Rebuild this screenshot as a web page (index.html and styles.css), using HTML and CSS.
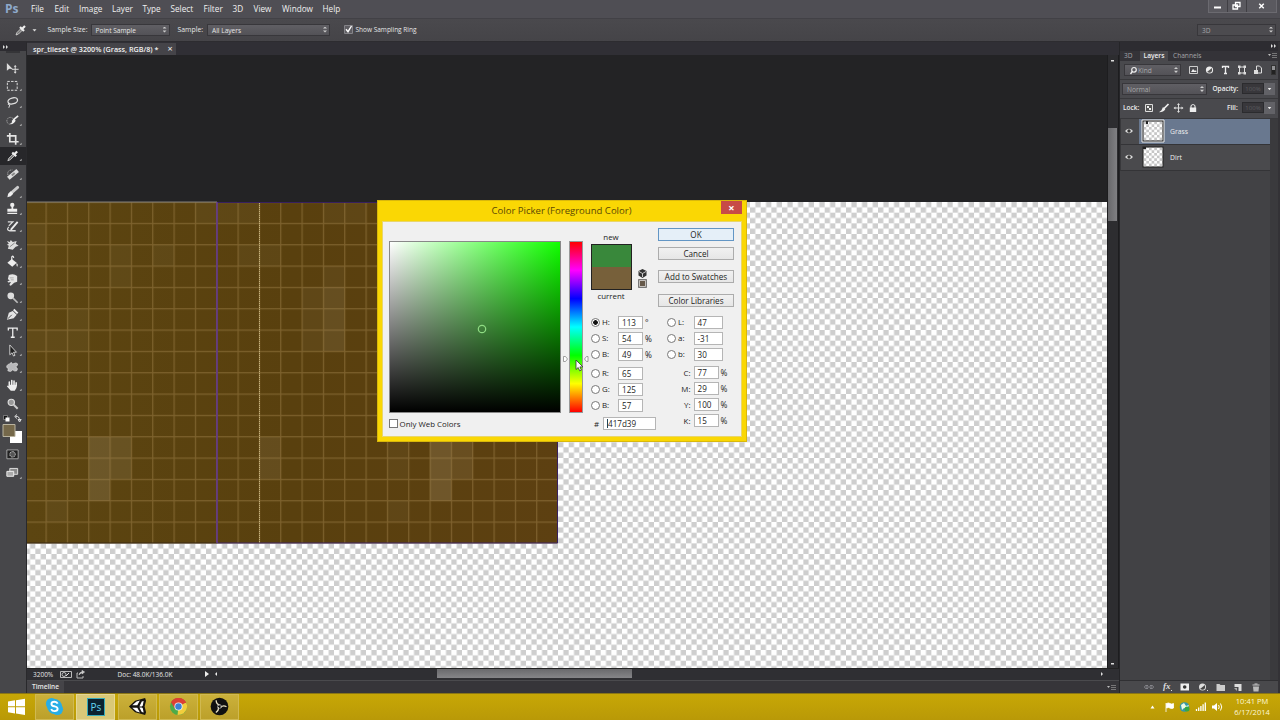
FILE: index.html
```html
<!DOCTYPE html>
<html lang="en">
<head>
<meta charset="utf-8">
<title>Photoshop</title>
<link rel="stylesheet" href="styles.css">
</head>
<body>
<div class="app">
  <header class="menubar">
    <b class="ps">Ps</b>
    <nav class="menus"><span>File</span><span>Edit</span><span>Image</span><span>Layer</span><span>Type</span><span>Select</span><span>Filter</span><span>3D</span><span>View</span><span>Window</span><span>Help</span></nav>
    <div class="winbtns">
      <svg viewBox="0 0 18 12"><path d="M5 7.5h7" stroke="#fff" stroke-width="2"/></svg>
      <svg viewBox="0 0 18 12"><path d="M7.5 2.5h4.500v4h-4.500zM5 5h4.500v4H5z" fill="#55545a" stroke="#fff" stroke-width="1.300"/></svg>
      <svg class="wide" viewBox="0 0 32 12"><path d="M13.500 3.500l5 5M18.500 3.500l-5 5" stroke="#fff" stroke-width="1.600"/></svg>
    </div>
  </header>

  <div class="options">
    <svg class="opt-pick" viewBox="0 0 24 16"><path d="M2 13l1-2.500 4-4 1.500 1.500-4 4z" fill="#777" stroke="#ddd" stroke-width=".8"/><path d="M6 5l4 4M8 7l3-3" stroke="#eee" stroke-width="2.200"/><path d="M18.500 7.300h4l-2 2.300z" fill="#ddd"/></svg>
    <span class="lbl ss">Sample Size:</span>
    <div class="select s1">Point Sample<i class="ud"></i></div>
    <span class="lbl sm">Sample:</span>
    <div class="select s2">All Layers<i class="ud"></i></div>
    <svg class="chk" viewBox="0 0 9 9"><path d="M.5.5h8v8h-8z" fill="#5e5d62" stroke="#858489"/><path d="M2 4.300l2 2.400L7.500 1" fill="none" stroke="#fff" stroke-width="1.400"/></svg>
    <span class="lbl ring">Show Sampling Ring</span>
    <div class="select s3">3D<i class="ud"></i></div>
  </div>

  <main class="work">
    <aside class="tools">
      <div class="toolhead"><svg viewBox="0 0 8 5"><path d="M1 0l2 2-2 2zM4 0l2 2-2 2z" fill="#ddd"/></svg></div>
      <div class="grip"></div>
      <svg class="tool" viewBox="0 0 26 18"><path d="M7 4v8l2.500-2 3.500.300z" fill="#ddd"/><path d="M15.500 7v7M12 10.500h7" stroke="#ddd"/><path d="M15.500 6l1.500 2h-3zM15.500 15l1.500-2h-3z" fill="#ddd"/></svg>
      <svg class="tool" viewBox="0 0 26 18"><path d="M7.500 4.500h10v9h-10z" fill="none" stroke="#ddd" stroke-dasharray="2.500 1.300"/><path d="M20 14h2v-2z" fill="#ccc"/></svg>
      <svg class="tool" viewBox="0 0 26 18"><ellipse cx="13" cy="7" rx="5" ry="3" fill="none" stroke="#ddd" stroke-width="1.300" transform="rotate(-15 13 7)"/><path d="M9 9q-2 2 1 2l-1 3" fill="none" stroke="#ddd"/><path d="M20 14h2v-2z" fill="#ccc"/></svg>
      <svg class="tool" viewBox="0 0 26 18"><circle cx="10.500" cy="9" r="3.500" fill="none" stroke="#aaa" stroke-dasharray="1.500 1"/><path d="M18.500 4l-5 4" stroke="#eee" stroke-width="1.800"/><path d="M14.500 7l1.500 2q-2 4-6 3 3-1 2-3z" fill="#eee"/><path d="M20 14h2v-2z" fill="#ccc"/></svg>
      <svg class="tool" viewBox="0 0 26 18"><path d="M10 3v9h9M7 6h9v9" fill="none" stroke="#e4e4e4" stroke-width="1.700"/><path d="M20 15h2v-2z" fill="#ccc"/></svg>
      <svg class="tool on" viewBox="0 0 26 18"><path d="M8 14l1-2.500 4.500-4.500 1.500 1.500-4.500 4.500z" fill="#777" stroke="#ddd" stroke-width=".8"/><path d="M12.500 5.500l4 4M14.500 7.500l3-3" stroke="#eee" stroke-width="2.200"/><path d="M20 14h2v-2z" fill="#ccc"/></svg>
      <svg class="tool" viewBox="0 0 26 18"><path d="M8.500 13.500L18 5.500" stroke="#ddd" stroke-width="4"/><path d="M12 10.700l3-2.500" stroke="#888" stroke-width="2"/><path d="M8 10q-1-5 5-5" fill="none" stroke="#bbb" stroke-dasharray="1 1"/><path d="M20 15h2v-2z" fill="#ccc"/></svg>
      <svg class="tool" viewBox="0 0 26 18"><path d="M18 4.500l-7 6" stroke="#ccc" stroke-width="3" stroke-linecap="round"/><path d="M11 8.500l2.500 2.500-2.500 2.500-3.500 1 .8-3.500z" fill="#eee"/><path d="M20 15h2v-2z" fill="#ccc"/></svg>
      <svg class="tool" viewBox="0 0 26 18"><circle cx="12.500" cy="5" r="2.200" fill="#eee"/><path d="M11.700 6h1.800v3h4v3h-10V9h4.200zM7.500 13h10v1.300h-10z" fill="#eee"/><path d="M20 15h2v-2z" fill="#ccc"/></svg>
      <svg class="tool" viewBox="0 0 26 18"><path d="M18 4l-7 8" stroke="#eee" stroke-width="1.900"/><path d="M8 4h5l-4 4M9 9q-3 3 1 4h6" fill="none" stroke="#ddd" stroke-width="1.300"/><path d="M20 14h2v-2z" fill="#ccc"/></svg>
      <svg class="tool" viewBox="0 0 26 18"><path d="M7 5l3 1 1-2 2 2 4-1-1 3 3 2-3 1-3 3-5-1 1-3-2-1 2-1z" fill="#ddd"/><path d="M10 11l5-4" stroke="#888"/><path d="M20 14h2v-2z" fill="#ccc"/></svg>
      <svg class="tool" viewBox="0 0 26 18"><path d="M12 6l5 4-4.500 4-5-4z" fill="#eee"/><path d="M12 8V4q1.500-2 2 1" fill="none" stroke="#eee" stroke-width="1.200"/><path d="M17 10q2 2 .7 4-1.300-.5-.7-4" fill="#eee"/><path d="M20 15h2v-2z" fill="#ccc"/></svg>
      <svg class="tool" viewBox="0 0 26 18"><path d="M9 4q5-2 8.500 1v6l-3 1-3.500 3-1.500-.8 1.700-2.900-2.700.5-1-1 2.500-1.500-2-1z" fill="#e4e4e4"/><path d="M10 7h4M11 9h3" stroke="#888" stroke-width=".6"/><path d="M20 14h2v-2z" fill="#ccc"/></svg>
      <svg class="tool" viewBox="0 0 26 18"><circle cx="11" cy="7" r="3.400" fill="#ddd"/><path d="M13 9l5 5" stroke="#bbb" stroke-width="1.700"/><path d="M20 14h2v-2z" fill="#ccc"/></svg>
      <svg class="tool" viewBox="0 0 26 18"><path d="M7 14l2-7 4-2 4 4-3 3.500z" fill="#e4e4e4"/><path d="M14 3.500l4 4" stroke="#eee" stroke-width="2"/><path d="M8 13l4-4" stroke="#555"/><path d="M20 15h2v-2z" fill="#ccc"/></svg>
      <svg class="tool" viewBox="0 0 26 18"><path d="M8.500 6.500V4.300h9v2.200M13 4.500v9M11 13.500h4" fill="none" stroke="#eee" stroke-width="1.300"/><path d="M20 14h2v-2z" fill="#ccc"/></svg>
      <svg class="tool" viewBox="0 0 26 18"><path d="M10 3v10l2.300-2 1.500 3.300 1.500-.7-1.500-3.200h3z" fill="#222" stroke="#ddd" stroke-width=".9"/><path d="M20 14h2v-2z" fill="#ccc"/></svg>
      <svg class="tool" viewBox="0 0 26 18"><path d="M10 5q1-3 3 0 4-2 5 0 0 2-2 3 3 2 1 4-2 1-4-1-2 3-5 1 0-2 1-2-3-1-2-3 1-2 3-2z" fill="#b8b8ba" stroke="#ddd" stroke-width=".7"/><path d="M20 14h2v-2z" fill="#ccc"/></svg>
      <svg class="tool" viewBox="0 0 26 18"><path d="M9.500 9V5M12 8V3.500M14.300 8V4M16.500 9V6" stroke="#eee" stroke-width="1.600" stroke-linecap="round"/><path d="M8.800 8h8.500q0 4-2.300 6h-4L7 9.500l1-.800 1.500 1z" fill="#eee"/><path d="M20 14h2v-2z" fill="#ccc"/></svg>
      <svg class="tool" viewBox="0 0 26 18"><circle cx="11.500" cy="7.500" r="3.200" fill="#999" stroke="#ddd" stroke-width="1.200"/><path d="M14 10l4 4" stroke="#ccc" stroke-width="2"/></svg>
      <svg class="swatches" viewBox="0 0 26 34"><path d="M3.500 3.500h4v4h-4z" fill="#111" stroke="#aaa" stroke-width=".6"/><path d="M5.500 5.500h4v4h-4z" fill="#fff"/><path d="M15.500 4.500q4-1 4 4M17 2.500l-2.300 2L17 6.500M18 7.500l1.600 2.500 1.600-2.500z" fill="none" stroke="#ddd"/><path d="M10 19h12v12H10z" fill="#fff"/><path d="M3 12.500h12v12H3z" fill="#75684a" stroke="#b9b39f"/></svg>
      <svg class="tool" viewBox="0 0 26 18"><path d="M7 4h11.500v9H7z" fill="#222" stroke="#bbb" stroke-width=".8"/><circle cx="12.800" cy="8.500" r="2.800" fill="#555" stroke="#ddd" stroke-dasharray="1 .7"/></svg>
      <svg class="tool" viewBox="0 0 26 18"><path d="M10 4.500h8v6h-8z" fill="#888" stroke="#ddd"/><path d="M7 7.500h7v5H7z" fill="#aaa" stroke="#eee"/><path d="M20 15h2v-2z" fill="#ccc"/></svg>
    </aside>

    <section class="doc">
      <div class="tabs"><div class="tab"><b>spr_tileset @ 3200% (Grass, RGB/8) *</b><span class="x">×</span></div></div>
      <div class="view">
        <svg class="canvas" viewBox="27 55 1080 613">
          <defs>
            <pattern id="chk" x="216.670" y="202" width="10.667" height="10.667" patternUnits="userSpaceOnUse"><path d="M0 0h10.667v10.667H0z" fill="#fff"/><path d="M5.333 0h5.334v5.333H5.333zM0 5.333h5.333v5.334H0z" fill="#cecece"/></pattern>
            <pattern id="grid" x="216.170" y="201.500" width="21.333" height="21.333" patternUnits="userSpaceOnUse"><path d="M.6 0v21.333M0 .6h21.333" stroke="#a98a52" stroke-opacity=".45" stroke-width="1.200"/></pattern>
            <linearGradient id="dirt"><stop offset="0" stop-color="#5c4511"/><stop offset=".5" stop-color="#59400e"/><stop offset="1" stop-color="#5d4011"/></linearGradient>
          </defs>
          <path d="M27 55h1080v147H27z" fill="#232325"/>
          <path d="M27 202h1080v466H27z" fill="url(#chk)"/>
          <path d="M27 202h530.700v341.300H27z" fill="url(#dirt)"/>
          <g fill="#b5a58a">
            <path d="M88.700 436.700h21.300v64H88.700z" opacity=".2"/><path d="M110 436.700h21.300v42.600H110z" opacity=".15"/>
            <path d="M430 436.700h21.300v64H430z" opacity=".22"/><path d="M451.300 436.700h21.400v42.600h-21.400z" opacity=".14"/>
            <path d="M259.300 436.700h21.400v42.600h-21.400z" opacity=".12"/><path d="M323.300 266h21.400v85.300h-21.400z" opacity=".07"/>
            <path d="M323.300 287.300h21.400v64h-21.400z" opacity=".08"/><path d="M302 287.300h21.300v64H302z" opacity=".07"/>
            <path d="M110 244.700h21.300v42.600H110zM152.700 244.700H174V266h-21.300zM216.700 202h42.600v21.300h-42.600zM67.300 308.700h21.400V330H67.300zM27 330h61.700v21.300H27zM323.300 202h42.700v21.300h-42.700zM238 244.700h42.700V266H238zM387.300 500.700h21.400V522h-21.400zM46 500.700h21.300V522H46zM27 223.300h19v64H27zM195.300 202h21.400v21.300h-21.400zM387.300 442h21.400v37h-21.400z" opacity=".06"/>
          </g>
          <path d="M27 202h530.700v341.300H27z" fill="url(#grid)"/>
          <path d="M27 202h190" stroke="#85817a"/>
          <path d="M217 202.500H557.500V543H217z" fill="none" stroke="#38205f"/>
          <path d="M27 543h190" stroke="#352510"/>
          <path d="M217 202v341" stroke="#7040a2" stroke-width="1.200"/>
          <path d="M259.500 203v340" stroke="#c6b27d" stroke-dasharray="1.300 .7"/>
        </svg>
        <div class="vscroll"><i class="thumb"></i></div>
      </div>
      <div class="status">
        <span class="pct">3200%</span>
        <svg class="staticon" viewBox="0 0 28 9"><path d="M.5 1.500h11v6H.5zM18 3h-1v5h6V6" fill="none" stroke="#bbb"/><circle cx="4" cy="4.500" r="2" fill="none" stroke="#bbb"/><path d="M6 6l3-3" stroke="#ddd"/><path d="M19 5q0-3 4-3M22 .5L24.500 2 22 4z" fill="#ccc" stroke="#ccc" stroke-width=".8"/></svg>
        <span class="docsize">Doc: 48.0K/136.0K</span>
        <svg class="arrows" viewBox="0 0 14 8"><path d="M1 1l4 3-4 3zM13 2l-2 2 2 2z" fill="#eee"/></svg>
        <i class="hthumb"></i>
        <svg class="rarrow" viewBox="0 0 4 6"><path d="M1 1l2 2-2 2z" fill="#ddd"/></svg>
      </div>
      <div class="timeline"><b>Timeline</b><svg viewBox="0 0 10 7"><path d="M0 2h3L1.500 4z" fill="#bbb"/><path d="M4 1.500h5M4 3.500h5M4 5.500h5" stroke="#888" stroke-width=".8"/></svg></div>
    </section>

    <aside class="panel">
      <div class="phead"><svg viewBox="0 0 8 5"><path d="M1 0l2 2-2 2zM4 0l2 2-2 2z" fill="#ddd"/></svg></div>
      <div class="ptabs"><span class="t3d">3D</span><b>Layers</b><span class="tch">Channels</span><svg viewBox="0 0 10 7"><path d="M0 2h3L1.500 4z" fill="#bbb"/><path d="M4 1.500h5M4 3.500h5M4 5.500h5" stroke="#888" stroke-width=".8"/></svg></div>
      <div class="prow filter">
        <div class="select kind"><svg viewBox="0 0 9 9"><circle cx="5" cy="3.800" r="2.300" fill="none" stroke="#eee" stroke-width="1.200"/><path d="M3.300 5.500L1.500 8" stroke="#eee" stroke-width="1.300"/></svg>Kind<i class="ud"></i></div>
        <svg class="ficons" viewBox="0 0 76 12"><path d="M1.500 2.500h8v7h-8z" fill="none" stroke="#ccc"/><path d="M3 8l2-3 2 2 1-1 .5 2z" fill="#eee"/><circle cx="21.500" cy="6" r="3.600" fill="#eee"/><path d="M24 4l-5 4q4 2 5-1z" fill="#555"/><path d="M34.500 4V2.500h6V4M37.500 2.500v7M36 9.500h3" fill="none" stroke="#eee" stroke-width="1.300"/><path d="M51.500 3h5v6h-5z" fill="none" stroke="#ddd"/><path d="M50 1.500h2.500V4H50zM55.500 1.500H58V4h-2.500zM50 8h2.500v2.500H50zM55.500 8H58v2.500h-2.500z" fill="#ddd"/><path d="M68.500 2h3l2 2v5h-5z" fill="none" stroke="#ddd"/><path d="M66 6h4v4h-4z" fill="#ddd"/></svg>
        <i class="toggle"></i>
      </div>
      <div class="prow blend"><div class="select normal">Normal<i class="ud"></i></div><span class="lab op">Opacity:</span><div class="num"><span>100%</span></div><div class="drop"><i></i></div></div>
      <div class="prow lock"><span class="lab">Lock:</span>
        <svg class="locks" viewBox="0 0 54 12"><path d="M1.500 2.500h7v7h-7z" fill="#555" stroke="#ddd"/><path d="M3 4h2v2H3zM5 6h2v2H5z" fill="#eee"/><path d="M24.500 2l-5 5" stroke="#eee" stroke-width="1.700"/><path d="M19 5l2.300 2.300q-1.500 3-6.300 3l2.500-2z" fill="#eee"/><path d="M34.500 2v8M30.500 6h8" stroke="#ddd"/><path d="M34.500 1L36 3h-3zM34.500 11l1.500-2h-3zM29.500 6l2-1.500v3zM39.500 6l-2-1.500v3z" fill="#ddd"/><path d="M47 6V4q2-3 4 0v2" fill="none" stroke="#ddd" stroke-width="1.200"/><path d="M45.800 5.500h6.400V10h-6.400z" fill="#eee"/></svg>
        <span class="lab fi">Fill:</span><div class="num"><span>100%</span></div><div class="drop"><i></i></div></div>
      <div class="layers">
        <div class="layer sel"><svg class="eye" viewBox="0 0 10 8"><path d="M1 4q4-4.500 8 0-4 4.500-8 0z" fill="#ddd"/><circle cx="5" cy="4" r="1.700" fill="#333"/></svg>
          <svg class="thumbnail" viewBox="0 0 24 24"><path d="M1 1h22v22H1z" fill="#222" stroke="#eee"/><path d="M2.500 2.500h19v19h-19z" fill="url(#mini)"/><path d="M5 2h2v3H5z" fill="#222"/><defs><pattern id="mini" width="5.300" height="5.300" patternUnits="userSpaceOnUse"><path d="M0 0h5.300v5.300H0z" fill="#fff"/><path d="M0 0h2.650v2.650H0zM2.650 2.650H5.300V5.300H2.650z" fill="#c6c6c6"/></pattern></defs></svg><span>Grass</span></div>
        <div class="layer"><svg class="eye" viewBox="0 0 10 8"><path d="M1 4q4-4.500 8 0-4 4.500-8 0z" fill="#ddd"/><circle cx="5" cy="4" r="1.700" fill="#333"/></svg>
          <svg class="thumbnail" viewBox="0 0 24 24"><path d="M1.500 1.500h21v21h-21z" fill="#222"/><path d="M2.500 2.500h19v19h-19z" fill="url(#mini)"/><path d="M2 2h3v2H2z" fill="#222"/></svg><span>Dirt</span></div>
      </div>
      <div class="pfoot"><svg viewBox="0 0 118 12"><path d="M6 4.500H3.500q-2 1.500 0 3H6M8 4.500h2.500q2 1.500 0 3H8M4 6h6" fill="none" stroke="#85858a"/><path d="M38.500 2.500h8.500v7h-8.500z" fill="#eee"/><circle cx="42.700" cy="6" r="1.800" fill="#333"/><circle cx="60.500" cy="6" r="3.500" fill="#ddd"/><path d="M63 4l-5 4q4 2 5-1z" fill="#444"/><path d="M65 9h1v1h-1zM29 9h1v1h-1z" fill="#ddd"/><path d="M74.500 3h3l1 1h4.500v6h-8.500z" fill="#ccc"/><path d="M92.500 3h7v7h-3V6h-4z" fill="#ddd"/><path d="M95 7h-3l3 3z" fill="#aaa"/><path d="M110.500 4h7M112.500 3h3" stroke="#ccc"/><path d="M111 5.500h6l-.5 5h-5z" fill="#bbb"/></svg><em>fx</em></div>
    </aside>
  </main>

  <footer class="taskbar">
    <svg class="win" viewBox="0 0 34 27"><path d="M8 7.500l7-1.200v6H8zM16 6.200l9-1.400v7.500h-9zM8 13.200h7v6.200l-7-1.100zM16 13.200h9v7.700l-9-1.400z" fill="#fff"/></svg>
    <div class="task"><svg viewBox="0 0 20 20"><circle cx="7" cy="7" r="6" fill="#28aee6"/><circle cx="13" cy="13" r="6" fill="#28aee6"/><circle cx="10" cy="10" r="7.800" fill="#28aee6"/><path d="M13.300 7Q12.500 5 10 5 6.800 5 6.800 7.300q0 2 3.200 2.500 3.300.6 3.300 2.600 0 2.500-3.300 2.500-2.500 0-3.500-2.200" fill="none" stroke="#fff" stroke-width="2"/></svg></div>
    <div class="task active"><span class="pslogo">Ps</span></div>
    <div class="task"><svg viewBox="0 0 20 20"><path d="M1 10l6.500-6L18 1l1 3-1.500 6L19 16l-1 3-10.500-3z" fill="#161410"/><path d="M4.500 8.700L9 4.700l3.500-1L9.800 8.700zM4.500 11.300h5.300l2.700 5-3.500-1zM14.500 4.700l2-.6-1 5.200-1 .7H12zM12 11h2.500l1 .7 1 4.500-2-.5z" fill="#fff"/></svg></div>
    <div class="task"><svg viewBox="0 0 20 20"><circle cx="10" cy="10" r="9" fill="#4dab48"/><path d="M10 10L2.200 5.500Q4.800 1 10 1q5.500 0 8 5z" fill="#dc4034"/><path d="M10 10l8-4.100q3 6.500-2.500 11.300Q13 19 9 19z" fill="#f2ce3c"/><path d="M10 6h8.200q-2.600-5-8.200-5-5 0-7.800 4.500L6 12z" fill="#dc4034"/><circle cx="10" cy="10" r="4.300" fill="#eee"/><circle cx="10" cy="10" r="3.400" fill="#3d82d4"/></svg></div>
    <div class="task"><svg viewBox="0 0 20 20"><circle cx="10" cy="10" r="9.300" fill="#111"/><g fill="none" stroke="#e8e0c0" stroke-width="1.400"><path d="M10 8.500q-3.500-1-3.500-5"/><path d="M10 8.500q-3.500-1-3.500-5" transform="rotate(120 10 10)"/><path d="M10 8.500q-3.500-1-3.500-5" transform="rotate(240 10 10)"/></g><circle cx="10" cy="10" r="2" fill="none" stroke="#bbb" stroke-width=".8"/></svg></div>
    <svg class="tray" viewBox="0 0 76 16"><path d="M1.500 9.500l2-3 2 3z" fill="#fff"/><path d="M17 4v9M17.500 4.500q2-1 3.500 0t3.500 0v4.500q-2 1-3.500 0t-3.500 0z" fill="#fff" stroke="#fff" stroke-width=".8"/><circle cx="35.500" cy="8" r="4.800" fill="#3797a8"/><path d="M32 6l3-2 2 3 3-1-2 4-3-1-2 2z" fill="#ecfae6"/><circle cx="38" cy="10" r="2.500" fill="#35a845"/><path d="M47.500 12v-2M49.700 12V8.500M51.900 12V7M54.100 12V5.300M56.300 12V3.500" stroke="#fff" stroke-width="1.300"/><path d="M63 6.500h2L68 4v8l-3-2.500h-2z" fill="#fff"/><path d="M69.500 6q1.500 2 0 4M71.500 4.500q2.500 3.500 0 7" fill="none" stroke="#fff"/></svg>
    <div class="clock"><span>10:41 PM</span><span>6/17/2014</span></div>
  </footer>

  <section class="dialog">
    <div class="title"><span>Color Picker (Foreground Color)</span><i class="close">×</i></div>
    <div class="body">
      <div class="left">
        <div class="field"><svg viewBox="0 0 172 172"><circle cx="93" cy="88" r="3.700" fill="none" stroke="#8fdc83" stroke-width="1.200"/></svg></div>
        <div class="web"><i class="box"></i>Only Web Colors</div>
      </div>
      <div class="slider"><div class="hue"></div>
        <svg class="markers" viewBox="0 0 28 24"><path d="M1.500 3.500h2l2 2.500-2 2.500h-2zM26 3.500h-1.500l-2 2.500 2 2.500H26z" fill="#fff" stroke="#888" stroke-width=".8"/><path d="M14 7v9.500l2.200-2 1.500 3.300 1.700-.7-1.500-3.200h3z" fill="#fff" stroke="#333" stroke-width=".8"/></svg>
      </div>
      <div class="mid">
        <div class="new">new</div>
        <div class="cmp"><div class="sw"></div><svg viewBox="0 0 11 20"><path d="M5.500 1l4 2v4.500l-4 2.500-4-2.500V3z" fill="#333"/><path d="M2 3.500l3.500 2L9 3.500M5.500 5.500V9" stroke="#eee" fill="none" stroke-width=".8"/><path d="M1.500 11.500h8v8h-8z" fill="#66594a" stroke="#777"/><path d="M2.500 12.500h6v6h-6z" fill="none" stroke="#ddd" stroke-width=".8"/></svg></div>
        <div class="new cur">current</div>
        <div class="rows">
          <div class="r"><i class="radio on"></i><label>H:</label><b>113</b><span>°</span></div>
          <div class="r"><i class="radio"></i><label>S:</label><b>54</b><span>%</span></div>
          <div class="r"><i class="radio"></i><label>B:</label><b>49</b><span>%</span></div>
          <div class="r g"><i class="radio"></i><label>R:</label><b>65</b></div>
          <div class="r"><i class="radio"></i><label>G:</label><b>125</b></div>
          <div class="r"><i class="radio"></i><label>B:</label><b>57</b></div>
          <div class="hex"><span>#</span><b><u></u>417d39</b></div>
        </div>
      </div>
      <div class="right">
        <div class="btn ok">OK</div><div class="btn b2">Cancel</div><div class="btn b3">Add to Swatches</div><div class="btn b4">Color Libraries</div>
        <div class="rows lab3">
          <div class="r"><i class="radio"></i><label>L:</label><b>47</b></div>
          <div class="r"><i class="radio"></i><label>a:</label><b>-31</b></div>
          <div class="r"><i class="radio"></i><label>b:</label><b>30</b></div>
        </div>
        <div class="rows cmyk">
          <div class="r"><label>C:</label><b>77</b><span>%</span></div>
          <div class="r"><label>M:</label><b>29</b><span>%</span></div>
          <div class="r"><label>Y:</label><b>100</b><span>%</span></div>
          <div class="r"><label>K:</label><b>15</b><span>%</span></div>
        </div>
      </div>
    </div>
  </section>
</div>
</body>
</html>
```
FILE: styles.css
```css
* { box-sizing: border-box; }
body { margin: 0; background: #232325; }
.app { position: relative; width: 1280px; height: 720px; display: flex; flex-direction: column; overflow: hidden; font-family: "Open Sans", "Noto Sans", sans-serif; font-size: 7px; color: #e6e6e6; white-space: nowrap; }
svg { display: block; flex: none; }

.menubar { height: 19px; background: #4f4e54; display: flex; align-items: center; padding: 0 0 1px 5px; border-bottom: 1px solid #424146; }
.ps { width: 26px; font-size: 12px; line-height: 16px; color: #8ea9cb; }
.menus { display: grid; grid-template-columns: 23.5px 24.5px 33px 30.5px 28px 33px 29px 21px 28.5px 40.5px 30px; font-size: 8.2px; color: #f0f0f0; }
.winbtns { display: flex; margin-left: auto; margin-right: 3px; align-self: flex-start; background: #5a595f; border: 1px solid #6b6a70; border-top: 0; }
.winbtns svg { width: 19px; height: 12px; border-right: 1px solid #403f44; }
.winbtns .wide { width: 29px; border-right: 0; }

.options { height: 23px; background: linear-gradient(#4a494d, #454448); border-bottom: 1px solid #2d2c30; display: flex; align-items: center; padding: 0 4px 1px 14px; }
.opt-pick { width: 24px; height: 16px; }
.lbl { font-size: 6.9px; }
.lbl.ring { font-size: 6.5px; }
.ss { margin-left: 9.5px; width: 43px; }
.select { position: relative; height: 12px; line-height: 11px; border: 1px solid #38373b; background: linear-gradient(#605f64, #535257); padding-left: 4px; font-size: 6.6px; }
.ud { position: absolute; right: 2px; top: 2px; width: 4px; height: 6px; background: #ccc; clip-path: polygon(50% 0, 100% 35%, 0 35%, 0 65%, 100% 65%, 50% 100%, 0 65%, 0 35%); }
.s1 { width: 79px; }
.sm { margin-left: 8px; width: 29.5px; }
.s2 { width: 123px; }
.chk { width: 9px; height: 9px; margin: 0 2.5px 0 14px; }
.s3 { margin-left: auto; width: 79px; color: #a5a5a8; background: #4c4b4f; }

.work { height: 651px; display: flex; }
.tools { width: 27px; background: #47474a; border-right: 1.5px solid #29292c; }
.toolhead { height: 9px; background: #2d2c31; padding: 3px 0 0 2px; }
.toolhead svg, .phead svg { width: 8px; height: 5px; }
.grip { height: 8px; margin: 0 6px; border-top: 2px solid #353538; }
.tool { width: 25.5px; height: 17.68px; }
.tool.on { background: #27272a; }
.swatches { width: 26px; height: 34px; }

.doc { width: 1092px; display: flex; flex-direction: column; }
.tabs { height: 13px; background: #302f35; padding-top: 1px; }
.tab { width: 149px; height: 12px; background: #454449; padding-left: 6px; display: flex; line-height: 12px; font-size: 7.2px; color: #f1f1f1; }
.tab b { width: 134.5px; font-weight: 600; }
.tab .x { font-size: 9px; }
.view { height: 613px; display: flex; }
.canvas { width: 1080px; height: 613px; }
.vscroll { width: 12px; background: #2d2d30; border-left: 1px solid #1d1d1f; border-right: 1px solid #1d1d1f; padding-top: 73px; background-image: linear-gradient(#ddd, #ddd), linear-gradient(#ddd, #ddd); background-size: 3px 1.5px; background-position: 3px 5px, 3px 608px; background-repeat: no-repeat; }
.thumb { display: block; width: 9px; height: 93px; background: linear-gradient(90deg, #68686b, #808083); }
.status { height: 12px; background: #2f2f33; border-top: 1px solid #222; display: flex; align-items: center; padding: 0 0 1px 6px; font-size: 6.5px; }
.pct { width: 27px; }
.staticon { width: 28px; height: 9px; }
.docsize { margin-left: 29.5px; width: 86.5px; }
.arrows { width: 14px; height: 8px; }
.hthumb { margin-left: 219px; align-self: flex-start; width: 195px; height: 9px; flex: none; background: linear-gradient(#69696c, #858588); }
.rarrow { width: 4px; height: 6px; margin-left: 468px; }
.timeline { height: 13px; background: #363539; border-top: 1px solid #4a4a4d; display: flex; align-items: center; justify-content: space-between; padding-right: 2px; font-size: 6.5px; }
.timeline b { width: 37px; padding-left: 5px; height: 12px; line-height: 12px; background: #454448; font-weight: 600; }
.timeline svg { width: 10px; height: 7px; }

.panel { width: 161px; background: #424245; border-left: 1px solid #252528; border-right: 2px solid #333236; display: flex; flex-direction: column; }
.phead { height: 9px; background: #2d2c31; display: flex; justify-content: flex-end; padding: 2px 0 0; }
.ptabs { height: 10px; background: #343338; display: flex; align-items: center; font-size: 6.6px; color: #a5a5a9; line-height: 10px; }
.t3d { width: 20px; padding-left: 4px; }
.ptabs b { width: 28px; text-align: center; color: #f0f0f0; background: #49484c; font-weight: 600; }
.tch { margin-left: 5px; }
.ptabs svg { width: 10px; height: 7px; margin-left: auto; }
.prow { display: flex; align-items: center; height: 18px; background: #49494d; border-bottom: 1px solid #38383b; }
.filter { height: 19px; }
.kind { width: 57px; margin-left: 4px; display: flex; color: #a9a9ad; }
.kind svg { width: 9px; height: 9px; margin-top: 1px; }
.ficons { width: 76px; height: 12px; margin-left: 7px; }
.toggle { width: 5px; height: 10px; margin-left: 7px; background: linear-gradient(#929295 50%, #222 50%); border: 1px solid #333; }
.blend { height: 19px; }
.normal { width: 85px; margin-left: 2px; color: #aaa; }
.lab { font-size: 6.5px; font-weight: 600; color: #eee; }
.op { margin-left: 5.5px; width: 29.5px; }
.num { width: 22px; height: 11px; line-height: 10px; background: #38373b; border: 1px solid #2b2b2e; color: #5c5c60; text-align: center; font-size: 6px; }
.drop { width: 11px; height: 12px; background: #626267; display: flex; align-items: center; justify-content: center; }
.drop i { width: 4px; height: 2.5px; background: #eee; clip-path: polygon(0 0, 100% 0, 50% 100%); }
.lock .lab:first-child { margin-left: 3px; width: 21px; }
.locks { width: 54px; height: 12px; }
.lock { height: 20px; padding-bottom: 1px; }
.lock .lab.fi { margin-left: 29px; width: 15px; }
.layers { height: 562px; padding-right: 8px; background: linear-gradient(90deg, #424245 150px, #3a3a3d 150px); display: flex; flex-direction: column; }
.layer { height: 26px; display: flex; align-items: center; background: #4a4a4d; border-bottom: 1px solid #343437; border-left: 1px solid #38383b; color: #eee; font-size: 6.8px; }
.layer span { padding-top: 1px; }
.layer.sel { background: linear-gradient(90deg, #4a4a4d 18px, #69788f 18px); }
.eye { width: 10px; height: 8px; margin-left: 3px; }
.thumbnail { width: 24px; height: 24px; margin: 0 5.5px 0 6.5px; }
.pfoot { position: relative; height: 13px; background: #49494c; border-top: 1px solid #303033; padding-left: 22px; }
.pfoot svg { width: 118px; height: 12px; }
.pfoot em { position: absolute; left: 43px; top: 0; font: italic bold 9px/11px "Liberation Serif", serif; color: #ddd; }

.taskbar { height: 27px; background: linear-gradient(#c7a706, #b99907); border-top: 1px solid #8a7616; display: flex; align-items: center; }
.win { width: 34px; height: 27px; margin-right: 1px; }
.task { width: 39px; height: 26px; margin-right: 2.3px; padding-bottom: 1px; background: linear-gradient(#cbb13a, #bca02a); border: 1px solid #d0b951; display: flex; align-items: center; justify-content: center; }
.task svg { width: 19px; height: 19px; }
.task.active { background: #d9c878; border-color: #e6d895; }
.pslogo { width: 18px; height: 18px; background: #0c2230; border: 1px solid #36aab9; color: #62d6f0; font-size: 10px; line-height: 16px; text-align: center; }
.tray { width: 76px; height: 16px; margin-left: auto; }
.clock { width: 54px; display: flex; flex-direction: column; align-items: center; font-size: 7.5px; line-height: 11px; color: #fff8d8; margin-right: 1px; }

.dialog { position: absolute; left: 377px; top: 200px; width: 370px; height: 242px; background: #fad704; border: 1px solid #d9b80b; font-size: 7.9px; color: #1c1c1c; padding: 0 4px 4px; }
.title { height: 20px; display: flex; justify-content: center; position: relative; line-height: 19px; font-size: 9.55px; color: #5b4904; padding-right: 1px; }
.close { position: absolute; right: 0; top: 0; width: 21px; height: 13px; background: #c74b47; color: #fff; font: bold 11px/13px "Open Sans", sans-serif; text-align: center; }
.body { height: 216px; background: #f0f0f0; display: flex; border: 1px solid #e9d66a; padding-left: 6px; }
.left { width: 174px; padding-top: 19px; }
.field { width: 172px; height: 172px; border: 1px solid #888; background: linear-gradient(to bottom, transparent, #000), linear-gradient(to right, #fff, #1f0); }
.field svg { width: 172px; height: 172px; margin: -1px; }
.web { display: flex; align-items: center; height: 12px; margin-top: 4.5px; }
.box { width: 9px; height: 9px; border: 1px solid #777; background: #fff; margin-right: 1.5px; }
.slider { width: 28px; padding: 19px 0 0 6px; position: relative; }
.hue { width: 14px; height: 172px; border: 1px solid #999; background: linear-gradient(#f00, #f0f 16.67%, #00f 33.33%, #0ff 50%, #0f0 66.67%, #ff0 83.33%, #f00); }
.markers { position: absolute; left: -1px; top: 131px; width: 28px; height: 24px; }
.mid { width: 67px; padding-top: 9px; }
.new { width: 40px; text-align: center; line-height: 12px; height: 13px; }
.cmp { display: flex; align-items: flex-end; gap: 5px; height: 46px; }
.cmp svg { width: 11px; height: 20px; margin-bottom: 2px; }
.sw { width: 41px; height: 46px; border: 1px solid #222; background: linear-gradient(#39883b 50%, #77603a 50%); }
.rows { padding-top: 12px; }
.new.cur { height: 12px; }
.r { display: flex; align-items: center; height: 16px; }
.r.g { margin-top: 3px; }
.radio { width: 9px; height: 9px; border: 1px solid #777; border-radius: 50%; background: #fff; margin-right: 2px; }
.radio.on { background: radial-gradient(circle, #111 2px, #fff 2.6px); }
.r label { width: 16px; }
.r b, .hex b { width: 25px; height: 13px; border: 1px solid #b5b5b5; background: #fff; font-weight: 400; padding-left: 3px; line-height: 12px; font-size: 8.1px; }
.r span { margin-left: 2px; font-size: 8.3px; }
.hex { display: flex; align-items: center; height: 16px; margin-top: 2.5px; }
.hex span { width: 12px; padding-left: 3px; }
.hex b { width: 53px; display: flex; }
.hex u { width: 1px; height: 9px; margin-top: 1px; background: #245; }
.right { width: 78px; padding-top: 6px; }
.btn { width: 76px; height: 13px; border: 1px solid #acacac; background: linear-gradient(#f1f1f1, #e6e6e6); text-align: center; line-height: 11px; margin-bottom: 6px; font-size: 8.1px; }
.btn.ok { border-color: #6396c5; background: #e5eff8; }
.btn.b2 { margin-bottom: 10px; }
.btn.b3 { margin-bottom: 10.5px; }
.btn.b4 { margin-bottom: 0; }
.lab3 { padding: 7.5px 0 0 9px; }
.lab3 .r label { width: 15.5px; }
.lab3 .r b { width: 29px; }
.cmyk { padding: 2.5px 0 0 24.5px; }
.cmyk .r label { width: 11px; margin-right: 0; padding-right: 3px; display: flex; justify-content: flex-end; }
```
